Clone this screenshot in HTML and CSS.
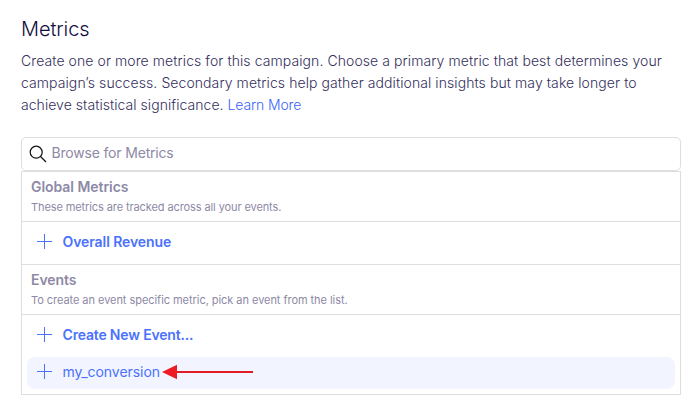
FILE: index.html
```
<!DOCTYPE html>
<html lang="en">
<head>
<meta charset="utf-8">
<title>Metrics</title>
<link rel="stylesheet" href="styles.css">
</head>
<body>
<main class="page">
  <h1 class="title"><span>Metrics</span></h1>
  <p class="intro">
    <span class="line line-1">Create one or more metrics for this campaign. Choose a primary metric that best determines your</span><br>
    <span class="line line-2">campaign’s success. Secondary metrics help gather additional insights but may take longer to</span><br>
    <span class="line line-3">achieve statistical significance. <a class="link">Learn More</a></span>
  </p>
  <div class="search">
    <svg class="search-icon" width="18" height="18" viewBox="0 0 18 18"><circle cx="7.2" cy="7.2" r="6" /><path d="M11.5 11.5L17 17" /></svg>
    <span class="placeholder">Browse for Metrics</span>
  </div>
  <section class="panel">
    <header class="group">
      <h2 class="group-title global">Global Metrics</h2>
      <p class="hint">These metrics are tracked across all your events.</p>
    </header>
    <div class="items single">
      <div class="item"><svg class="plus" width="15" height="15" viewBox="0 0 15 15"><path d="M0 7.5H15M7.5 0V15" /></svg><span class="label strong revenue">Overall Revenue</span></div>
    </div>
    <header class="group">
      <h2 class="group-title events">Events</h2>
      <p class="hint hint-events">To create an event specific metric, pick an event from the list.</p>
    </header>
    <div class="items">
      <div class="item"><svg class="plus" width="15" height="15" viewBox="0 0 15 15"><path d="M0 7.5H15M7.5 0V15" /></svg><span class="label strong create">Create New Event...</span></div>
      <div class="item active"><svg class="plus" width="15" height="15" viewBox="0 0 15 15"><path d="M0 7.5H15M7.5 0V15" /></svg><span class="label conversion">my_conversion</span><svg class="arrow" width="92" height="16" viewBox="0 0 92 16"><path class="shaft" d="M14 8H91" /><path class="head" d="M0 8L15 .8V15.2Z" /></svg></div>
    </div>
  </section>
</main>
</body>
</html>
```

FILE: styles.css
```
* { box-sizing: border-box; }
body { margin: 0; background: #fff; font-family: Inter, "Liberation Sans", sans-serif; }
h1, h2, p { margin: 0; }
.page { padding: 17px 18px 0 21px; }
.title { font-size: 20px; line-height: 24px; font-weight: 300; letter-spacing: -.1px; color: #130e40; }
.intro { margin: 9px 0 0; height: 66px; font-size: 14px; line-height: 22px; font-weight: 300; color: #342f5c; white-space: nowrap; }
.line { letter-spacing: .08px; }
.line-3 { letter-spacing: .05px; }
.link { letter-spacing: -.13px; color: #3a66fb; }
.search { display: flex; align-items: center; height: 34px; margin-top: 21px; padding: 0 8px; border: 1px solid #dedede; border-radius: 5px; }
.search-icon { flex: none; margin-left: -1px; fill: none; stroke: #111; stroke-width: 1.2; }
.placeholder { margin: -2px 0 0 4.5px; font-size: 14px; line-height: 18px; letter-spacing: -.18px; color: #8d89a6; }
.panel { height: 224px; border: 1px solid #dedede; }
.group { height: 50px; padding: 6px 9px 0; border-bottom: 1px solid #dedede; }
.group-title { font-size: 14px; line-height: 18px; font-weight: 600; letter-spacing: -.05px; color: #8d89a6; }
.hint { margin-top: 4px; font-size: 11px; line-height: 14px; letter-spacing: -.1px; color: #8d89a6; }
.hint-events { letter-spacing: -.05px; }
.items { padding: 5px 5px 0; }
.items.single { height: 43px; border-bottom: 1px solid #dedede; }
.item { display: flex; align-items: center; height: 32px; padding-left: 10px; border-radius: 8px; }
.item.active { margin-top: 5px; background: #f2f5ff; }
.plus { flex: none; margin-top: -3px; fill: none; stroke: #4a72fb; stroke-width: 1; }
.label { margin: -2px 0 0 10.5px; font-size: 14px; line-height: 18px; color: #4a72fb; white-space: nowrap; }
.strong { font-weight: 600; }
.revenue { letter-spacing: -.08px; }
.create { letter-spacing: -.18px; }
.conversion { letter-spacing: -.05px; }
.arrow { flex: none; margin: -2px 0 0 1.5px; }
.shaft { stroke: #e21b25; stroke-width: 2; fill: none; }
.head { fill: #ed1c24; }
```
